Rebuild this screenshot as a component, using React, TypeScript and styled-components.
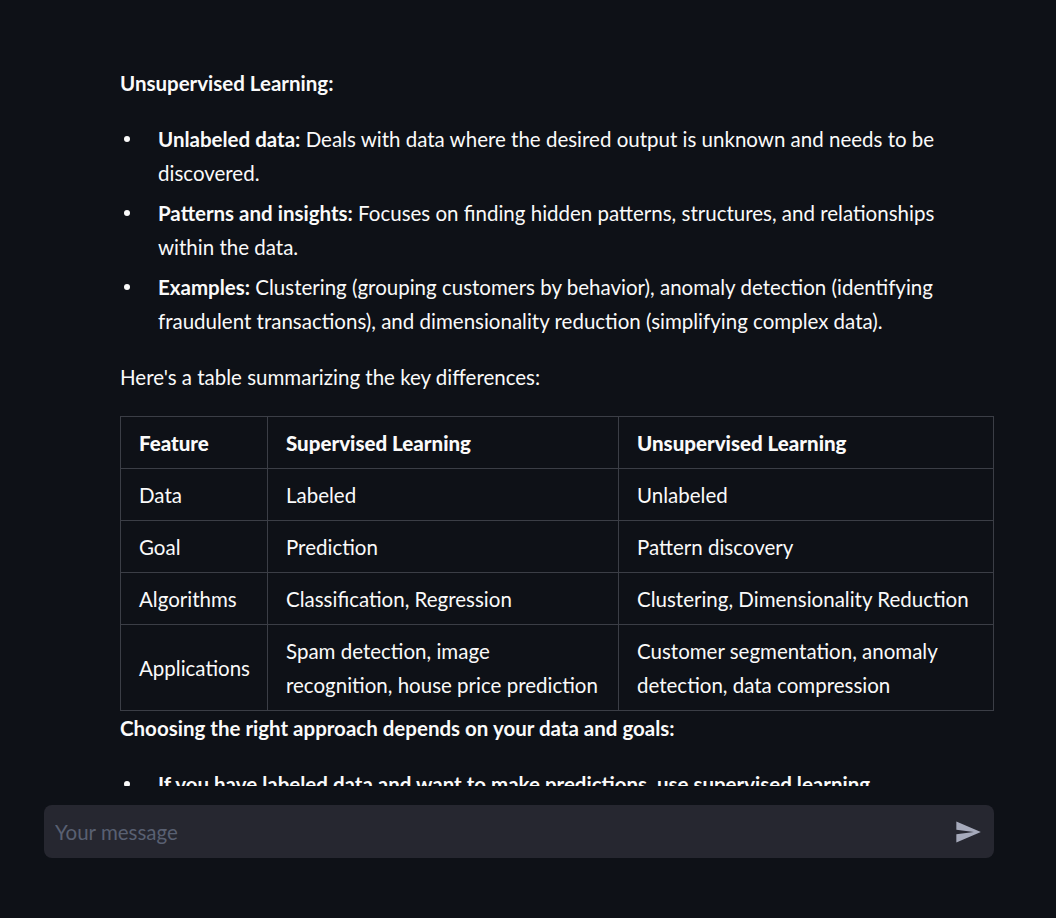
import styled, { createGlobalStyle } from "styled-components";

const GlobalStyle = createGlobalStyle`
  html, body {
    margin: 0;
    padding: 0;
    background-color: #0e1117;
  }
  body {
    font-family: Lato, "Noto Sans", sans-serif;
    color: #fafafa;
  }
`;

const Page = styled.div`
  height: 100vh;
  display: flex;
  flex-direction: column;
  padding: 0 62px 0 44px;
  box-sizing: border-box;
`;

const Messages = styled.div`
  flex: 1;
  overflow: hidden;
  padding: 66px 0 0 76px;
  font-size: 20.5px;
  line-height: 34px;
`;

const Para = styled.p`
  margin: 0 0 22px;
  & strong {
    font-weight: 700;
  }
`;

const List = styled.ul`
  margin: 0 0 22px;
  padding-left: 38px;
  list-style: none;
  & li {
    position: relative;
  }
  & li + li {
    margin-top: 6px;
  }
  & li::before {
    content: "";
    position: absolute;
    left: -34px;
    top: 14px;
    width: 6px;
    height: 6px;
    border-radius: 50%;
    background-color: #fafafa;
  }
`;

const Table = styled.table`
  width: calc(100% - 1px);
  border-collapse: collapse;
  table-layout: fixed;
  margin: 0;
  & th,
  & td {
    border: 1px solid #3b3e46;
    padding: 9px 10px 8px 18px;
    text-align: left;
    vertical-align: middle;
    white-space: pre-line;
  }
  & th {
    font-weight: 900;
  }
`;

const Col = styled.col<{ $w: number }>`
  width: ${(p) => p.$w}px;
`;

const Footer = styled.div`
  padding: 19px 0 60px;
`;

const InputBox = styled.div`
  height: 53px;
  border-radius: 8px;
  background-color: #262730;
  display: flex;
  align-items: center;
  padding: 0 12px 0 11px;
`;

const Input = styled.input`
  flex: 1;
  border: none;
  outline: none;
  background: transparent;
  color: #fafafa;
  font-family: Lato, "Noto Sans", sans-serif;
  font-size: 20.5px;
  padding: 0;
  &::placeholder {
    color: #596072;
  }
`;

const SendButton = styled.button`
  border: none;
  background: transparent;
  padding: 0;
  display: flex;
  align-items: center;
  cursor: pointer;
  color: #a6aabb;
`;

const rows: [string, string, string][] = [
  ["Data", "Labeled", "Unlabeled"],
  ["Goal", "Prediction", "Pattern discovery"],
  ["Algorithms", "Classification, Regression", "Clustering, Dimensionality Reduction"],
  [
    "Applications",
    "Spam detection, image\nrecognition, house price prediction",
    "Customer segmentation, anomaly\ndetection, data compression",
  ],
];

const App = () => {
  return (
    <Page>
      <GlobalStyle />
      <Messages>
        <Para>
          <strong>Unsupervised Learning:</strong>
        </Para>
        <List>
          <li>
            <strong>Unlabeled data:</strong> Deals with data where the desired output is
            unknown and needs to be discovered.
          </li>
          <li>
            <strong>Patterns and insights:</strong> Focuses on finding hidden patterns,
            structures, and relationships within the data.
          </li>
          <li>
            <strong>Examples:</strong> Clustering (grouping customers by behavior), anomaly
            detection (identifying fraudulent transactions), and dimensionality reduction
            (simplifying complex data).
          </li>
        </List>
        <Para>Here's a table summarizing the key differences:</Para>
        <Table>
          <colgroup>
            <Col $w={147} />
            <Col $w={351} />
            <Col $w={375} />
          </colgroup>
          <thead>
            <tr>
              <th>Feature</th>
              <th>Supervised Learning</th>
              <th>Unsupervised Learning</th>
            </tr>
          </thead>
          <tbody>
            {rows.map((r) => (
              <tr key={r[0]}>
                <td>{r[0]}</td>
                <td>{r[1]}</td>
                <td>{r[2]}</td>
              </tr>
            ))}
          </tbody>
        </Table>
        <Para>
          <strong>Choosing the right approach depends on your data and goals:</strong>
        </Para>
        <List>
          <li>
            <strong>
              If you have labeled data and want to make predictions, use supervised learning.
            </strong>
          </li>
          <li>
            <strong>
              If you have unlabeled data and want to discover hidden patterns, use
              unsupervised learning.
            </strong>
          </li>
        </List>
      </Messages>
      <Footer>
        <InputBox>
          <Input placeholder="Your message" />
          <SendButton aria-label="Send">
            <svg width="28" height="28" viewBox="0 0 24 24" fill="currentColor">
              <path d="M2.01 21L23 12 2.01 3 2 10l15 2-15 2z" />
            </svg>
          </SendButton>
        </InputBox>
      </Footer>
    </Page>
  );
};

export default App;
